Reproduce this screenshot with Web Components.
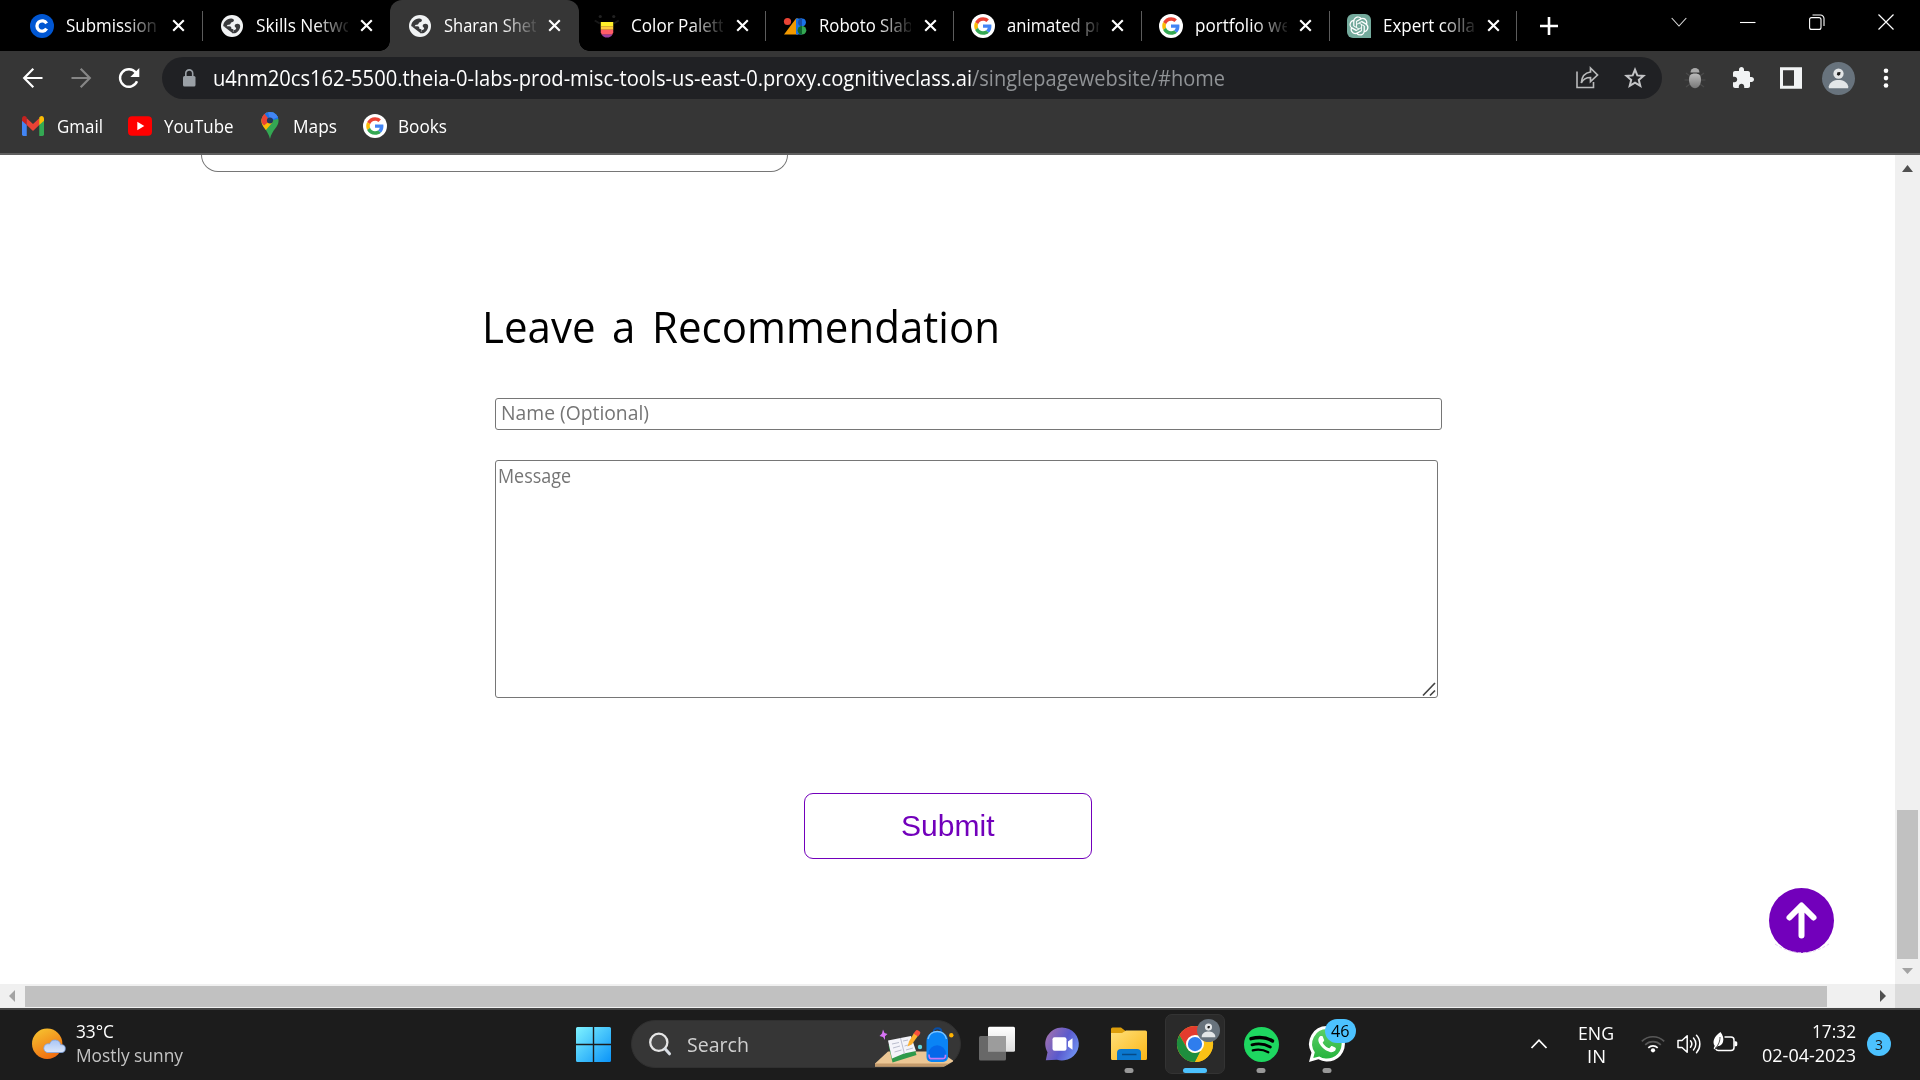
<!DOCTYPE html>
<html lang="en">
<head>
<meta charset="utf-8">
<title>Sharan Shetty</title>
<style>
html,body{margin:0;padding:0;height:100%;overflow:hidden;background:#fff}
body{font-family:"Open Sans","Noto Sans",sans-serif;font-size:18px}
</style>
</head>
<body>
<desktop-screen></desktop-screen>
<script>
const ICONS = {
coursera:['0 0 24 24','<circle cx="12" cy="12" r="12" fill="#0056d2"/><path d="M16.6 9.3A5.2 5.2 0 1 0 16.6 14.7" fill="none" stroke="#fff" stroke-width="3.3"/>'],
globe:['0 0 24 24','<circle cx="12" cy="12" r="11" fill="#f1f3f4"/><path d="M11.6 4.6C14 5 14.6 6.4 13.4 7.4c-1 .9-2.6.6-2.8 2 .1 1-1.500 1.100-2.500 1.300-1.300.300-.8 1.500-2 1.700L3.200 12.200c.1-4 3.600-8 8.400-7.600zM3.600 12.200h5.800c1.600.1 2.200 1.100 1.900 2.600l1.800.5c.8.4.5 1.600-.2 2l.1 2.200" fill="#3a3b3d"/><path d="M15.500 10.200c1.200-.9 3.200-.7 4.300.5 1.200 2.400-.5 6.500-4 8.300-1.400.5-2.900.5-3.700-.3 1.100-.3 1.500-1.200 1.600-2.400.6-.7 2.300-.3 2.500-1.900-.2-1.600-2.800-1.600-.7-4.200z" fill="#3a3b3d"/>'],
palette:['2.25 .5 24 24','<g fill="#222"><circle cx="7.500" cy="3" r="1.600"/><circle cx="21" cy="3" r="1.600"/></g><path d="M2 7l5 3M26 7l-5 3" stroke="#181818" stroke-width="2"/><path d="M8 8.500h12.500v4.500H8z" fill="#fff02a"/><path d="M8 12.800h12.500v3.500H8z" fill="#ffc93d"/><path d="M8 16.200h12.500v2.500l-1 2.600H9l-1-2.600z" fill="#ff5d68"/><path d="M9 21h10.600c-1 2.200-3 3.100-5.300 3.100S10 23.200 9 21z" fill="#9b3fa0"/>'],
gfonts:['0 0 24 24','<path d="M13 4.500h2v16H1z" fill="#f29900"/><path d="M13 4.500h6v16h-6z" fill="#1a73e8"/><circle cx="4.500" cy="7.500" r="3.600" fill="#ea4335"/><circle cx="19" cy="8.300" r="3.900" fill="#1a73e8"/><path d="M19 4.400a3.900 3.900 0 0 0 0 7.800z" fill="#174ea6"/><circle cx="19" cy="16.200" r="4.300" fill="#34a853"/><path d="M19 11.900a4.300 4.300 0 0 0 0 8.600z" fill="#0d652d"/>'],
google:['0 0 24 24','<circle cx="12" cy="12" r="12" fill="#fff"/><g transform="translate(3.200 3.200) scale(.367)"><path fill="#EA4335" d="M24 9.500c3.540 0 6.710 1.220 9.210 3.600l6.850-6.850C35.900 2.380 30.470 0 24 0 14.620 0 6.510 5.380 2.560 13.220l7.980 6.190C12.430 13.720 17.740 9.500 24 9.500z"/><path fill="#4285F4" d="M46.980 24.550c0-1.570-.15-3.090-.38-4.550H24v9.020h12.940c-.58 2.960-2.260 5.480-4.780 7.180l7.730 6c4.510-4.180 7.090-10.360 7.090-17.650z"/><path fill="#FBBC05" d="M10.530 28.590c-.48-1.450-.76-2.990-.76-4.590s.27-3.140.76-4.590l-7.980-6.190C.92 16.460 0 20.120 0 24c0 3.880.92 7.540 2.560 10.780l7.970-6.190z"/><path fill="#34A853" d="M24 48c6.480 0 11.930-2.130 15.890-5.810l-7.730-6c-2.150 1.450-4.920 2.300-8.160 2.300-6.260 0-11.570-4.220-13.470-9.910l-7.980 6.190C6.510 42.620 14.620 48 24 48z"/></g>'],
openai:['0 0 24 24','<path d="M6 0h12a6 6 0 0 1 6 6v18H6a6 6 0 0 1-6-6V6a6 6 0 0 1 6-6z" fill="#74aa9c"/><path transform="translate(2.400 2.400) scale(.8)" fill="#fff" d="M22.2819 9.8211a5.9847 5.9847 0 0 0-.5157-4.9108 6.0462 6.0462 0 0 0-6.5098-2.9A6.0651 6.0651 0 0 0 4.9807 4.1818a5.9847 5.9847 0 0 0-3.9977 2.9 6.0462 6.0462 0 0 0 .7427 7.0966 5.98 5.98 0 0 0 .511 4.9107 6.051 6.051 0 0 0 6.5146 2.9001A5.9847 5.9847 0 0 0 13.2599 24a6.0557 6.0557 0 0 0 5.7718-4.2058 5.9894 5.9894 0 0 0 3.9977-2.9001 6.0557 6.0557 0 0 0-.7475-7.0729zm-9.022 12.6081a4.4755 4.4755 0 0 1-2.8764-1.0408l.1419-.0804 4.7783-2.7582a.7948.7948 0 0 0 .3927-.6813v-6.7369l2.02 1.1686a.071.071 0 0 1 .038.052v5.5826a4.504 4.504 0 0 1-4.4945 4.4944zm-9.6607-4.1254a4.4708 4.4708 0 0 1-.5346-3.0137l.142.0852 4.783 2.7582a.7712.7712 0 0 0 .7806 0l5.8428-3.3685v2.3324a.0804.0804 0 0 1-.0332.0615L9.74 19.9502a4.4992 4.4992 0 0 1-6.1408-1.6464zM2.3408 7.8956a4.485 4.485 0 0 1 2.3655-1.9728V11.6a.7664.7664 0 0 0 .3879.6765l5.8144 3.3543-2.0201 1.1685a.0757.0757 0 0 1-.071 0l-4.8303-2.7865A4.504 4.504 0 0 1 2.3408 7.872zm16.5963 3.8558L13.1038 8.364 15.1192 7.2a.0757.0757 0 0 1 .071 0l4.8303 2.7913a4.4944 4.4944 0 0 1-.6765 8.1042v-5.6772a.79.79 0 0 0-.407-.667zm2.0107-3.0231l-.142-.0852-4.7735-2.7818a.7759.7759 0 0 0-.7854 0L9.409 9.2297V6.8974a.0662.0662 0 0 1 .0284-.0615l4.8303-2.7866a4.4992 4.4992 0 0 1 6.6802 4.66zM8.3065 12.863l-2.02-1.1638a.0804.0804 0 0 1-.038-.0567V6.0742a4.4992 4.4992 0 0 1 7.3757-3.4537l-.142.0805L8.704 5.459a.7948.7948 0 0 0-.3927.6813zm1.0976-2.3654l2.602-1.4998 2.6069 1.4998v2.9994l-2.5974 1.4997-2.6067-1.4997Z"/>'],
close:['0 0 14 14','<path d="M1.300 1.300l11.400 11.400M12.700 1.300L1.300 12.700" stroke="#fff" stroke-width="2.300"/>'],
plus:['0 0 18 18','<path d="M9 0v18M0 9h18" stroke="#fff" stroke-width="2.600"/>'],
winv:['0 0 16 16','<path d="M.7 4L8 12l7.300-8" fill="none" stroke="#ddd" stroke-width="1.100"/>'],
winmin:['0 0 16 16','<path d="M0 8.500h15.500" stroke="#fff" stroke-width="1.100"/>'],
winmax:['0 0 16 16','<rect x=".6" y="3.600" width="11.400" height="11.800" rx="2" fill="none" stroke="#fff" stroke-width="1.100"/><path d="M3.500 1h8a3.500 3.500 0 0 1 3.500 3.500v7.500" fill="none" stroke="#fff" stroke-width="1.100"/>'],
winx:['0 0 16 16','<path d="M.5.5l15 15M15.500.5l-15 15" stroke="#fff" stroke-width="1.200"/>'],
back:['0 0 24 24','<path d="M21.500 12H3.500M12.300 2.800L3.200 12l9.100 9.200" fill="none" stroke="#fff" stroke-width="2.200"/>'],
fwd:['0 0 24 24','<path d="M2.500 12h18M11.700 2.800l9.100 9.200-9.100 9.200" fill="none" stroke="#868686" stroke-width="2.200"/>'],
reload:['0 0 24 24','<path d="M20 15.300A8.800 8.800 0 1 1 18.800 6.600" fill="none" stroke="#fff" stroke-width="2.400"/><path d="M22.300 2v9h-9z" fill="#fff"/>'],
lock:['0 0 24 24','<rect x="6" y="10" width="12.500" height="10.600" rx="1.500" fill="#9aa0a6"/><path d="M8.800 10.500V7.300a3.450 3.450 0 0 1 6.900 0v3.200" fill="none" stroke="#9aa0a6" stroke-width="1.600"/>'],
share:['0 0 24 24','<path d="M2 5.500v16h16.500v-5.500" fill="none" stroke="#b9babb" stroke-width="1.600"/><path d="M15.500 2l7 7-7 6.500v-4C11 11.500 8 13.500 6.300 17c.4-6 3.600-10.300 9.200-11z" fill="none" stroke="#b9babb" stroke-width="1.700" stroke-linejoin="miter"/>'],
star:['0 0 24 24','<path d="M12 3.700l2.300 5.700 6.200.5-4.700 4 1.500 6L12 16.600 6.700 19.900l1.500-6-4.700-4 6.200-.5z" fill="none" stroke="#c3c4c6" stroke-width="2"/>'],
bug:['0 0 24 24','<defs><linearGradient id="b" x2="0" y2="1"><stop stop-color="#bbb"/><stop offset="1" stop-color="#777"/></linearGradient></defs><path d="M3 7l4 3M21 7l-4 3M1.500 14H6M22.500 14H18M3 21l4-3M21 21l-4-3" stroke="#4a4a4a" stroke-width="1.200"/><path d="M7.500 6.500a4.500 4.500 0 0 1 9 0z" fill="#aaa"/><path d="M12 7.500c4.500 0 6 2 6 6.500 0 4-2.500 8.300-6 8.300S6 18 6 14c0-4.500 1.500-6.500 6-6.500z" fill="url(#b)"/>'],
puzzle:['0 0 24 24','<path fill="#f1f3f4" d="M20.500 11H19V7c0-1.100-.9-2-2-2h-4V3.500C13 2.120 11.880 1 10.500 1S8 2.120 8 3.500V5H4c-1.100 0-1.990.9-1.990 2v3.800H3.500c1.490 0 2.700 1.210 2.700 2.700s-1.210 2.700-2.700 2.700H2V20c0 1.100.9 2 2 2h3.800v-1.500c0-1.490 1.210-2.700 2.700-2.700 1.490 0 2.700 1.210 2.700 2.700V22H17c1.100 0 2-.9 2-2v-4h1.500c1.380 0 2.500-1.120 2.500-2.500S21.880 11 20.500 11z"/>'],
panel:['0 0 24 24','<path fill-rule="evenodd" fill="#f1f3f4" d="M1 1.300h22v21.500H1zM4 4.300v15.500h11V4.300z"/>'],
avatar:['0 0 34 34','<circle cx="17" cy="17" r="17" fill="#68737d"/><circle cx="17" cy="12" r="5.300" fill="#e3e6e8"/><path d="M7 27v-2c1-4.500 5.500-6.500 10-6.500s9 2 10 6.500v2z" fill="#e3e6e8"/><path d="M15.300 13.200l.6-2.700 3.200-.3-.4 3-1.700 1z" fill="#1d1d1d"/>'],
menu:['0 0 24 24','<g fill="#fff"><circle cx="12" cy="4.700" r="2.300"/><circle cx="12" cy="12.100" r="2.300"/><circle cx="12" cy="19.500" r="2.300"/></g>'],
gmail:['0 0 24 18','<path d="M0 2.500h5.200V18H1.600A1.600 1.600 0 0 1 0 16.400z" fill="#4285f4"/><path d="M18.800 2.500H24v13.900a1.600 1.600 0 0 1-1.600 1.600h-3.600z" fill="#34a853"/><path d="M5.200 2L12 7.200 18.800 2v6.200L12 13.400 5.200 8.200z" fill="#ea4335"/><path d="M0 2.600C0 0 2.700-.7 4.500.7l.7.600v6.900L0 4.300z" fill="#c5221f"/><path d="M24 2.600c0-2.600-2.700-3.300-4.500-1.900l-.7.600v6.900L24 4.300z" fill="#fbbc04"/>'],
youtube:['0 0 24 20','<rect y=".3" width="24" height="19.400" rx="4" fill="#f00"/><path d="M9.300 5.800l7 4.200-7 4.200z" fill="#fff"/>'],
maps:['0 0 18 28','<clipPath id="m"><path d="M9 0a8.600 8.600 0 0 1 8.600 8.700C17.600 16 11 18 9 28 7 18 .4 16 .4 8.700A8.600 8.600 0 0 1 9 0z"/></clipPath><g clip-path="url(#m)"><path d="M0 0h18v28H0z" fill="#34a853"/><path d="M0 6l6 5 6-5 0 4L3 21-3 14z" fill="#fbbc04"/><path d="M0 0h6L9 9 3 14-2 8z" fill="#ea4335"/><path d="M3 1L18-4v11L9 9z" fill="#1a73e8"/><path d="M7 0h11v5L13 7 9 8z" fill="#4285f4"/></g><circle cx="9" cy="8.700" r="3.100" fill="#20385e"/>'],
weather:['0 0 33 33','<defs><linearGradient id="s" x1=".2" y1="0" x2=".7" y2="1"><stop stop-color="#f6c22f"/><stop offset="1" stop-color="#f0690f"/></linearGradient><linearGradient id="c" x2="0" y2="1"><stop stop-color="#a9c5f5"/><stop offset="1" stop-color="#dbe6fa"/></linearGradient></defs><circle cx="15.200" cy="15.700" r="15.200" fill="url(#s)"/><path d="M15 24.500h14.200a3.900 3.900 0 0 0 .3-7.800h-.9a5.700 5.700 0 0 0-11-.8A4.400 4.400 0 0 0 15 24.500z" fill="url(#c)" stroke="#7fa6e6" stroke-width=".8"/>'],
windows:['0 0 35 35','<defs><linearGradient id="w" x2="1" y2="1"><stop stop-color="#7ff3ff"/><stop offset="1" stop-color="#0a93f8"/></linearGradient></defs><path fill="url(#w)" d="M1.500 0H16.800v16.800H0V1.500A1.500 1.500 0 0 1 1.500 0zM18.200 0h15.300A1.500 1.500 0 0 1 35 1.500v15.300H18.200zM0 18.200h16.800V35H1.500A1.500 1.500 0 0 1 0 33.500zM18.200 18.200H35v15.300a1.500 1.500 0 0 1-1.500 1.500H18.200z"/>'],
search:['0 0 24 24','<circle cx="10.800" cy="10.300" r="8.600" fill="#4b4b4b" stroke="#e6e6e6" stroke-width="2.300"/><path d="M17 16.800l4.500 5" stroke="#d9dee5" stroke-width="3" stroke-linecap="round"/>'],
desk:['0 0 80 40','<path d="M13 24.500h52l13 9v1l-9 5H0v-3z" fill="#ecc795"/><path d="M0 36.500h74l-5 3H0z" fill="#c39a6b"/><path d="M8 2.500l1.500 3.500 3 1-2.500 2.200 0 3.800-2-3-3.500-1 2.500-2.500z" fill="#d773f5"/><path d="M13.500 18l4 17.500 24-7.500 -1.500-5z" fill="#2e9a4b"/><path d="M13 13.500l12.500-2.500L36 9l5 15-12 2.500-12 5z" fill="#f4f4fa"/><path d="M25.500 11L29.500 27M17 17l7-1.500M18 21l7-2M19.500 25l7-2M28 14l5-1M29.500 19l7-2M31 23l7-2" stroke="#b3b7c8" stroke-width=".9" fill="none"/><path d="M32.500 19.500l1.500-5 5-8.500 4 2.700-6 8.500z" fill="#ffb02e"/><path d="M38.500 6.500l2-2.500a2 2 0 0 1 2.800-.5l1.200.8a2 2 0 0 1 .5 2.700l-2 2.500z" fill="#f8503c"/><circle cx="45" cy="20" r="2.200" fill="#5fd6e0"/><circle cx="76.300" cy="8.300" r="2.200" fill="#ffb300"/><path d="M58.500 5c0-5 8-5 8 0" fill="none" stroke="#084fa8" stroke-width="1.800"/><path d="M51.500 14c0-13 21.500-13 21.500 0v16a5 5 0 0 1-5 5H56.500a5 5 0 0 1-5-5z" fill="#0a84f5"/><path d="M53 12c2-10 16.500-10 18.500 0" fill="none" stroke="#7cc4ff" stroke-width="1.300"/><path d="M53.500 27a8.700 8.700 0 0 1 17.400 0v6H53.500z" fill="#0568ea"/><path d="M54 27.500c0 4 1 4.200 3 4.200h10.500c2 0 3-.5 3-4" fill="none" stroke="#c77bf5" stroke-width="1.700"/>'],
taskview:['0 0 36 36','<defs><linearGradient id="t" x2="0" y2="1"><stop stop-color="#fff"/><stop offset="1" stop-color="#ddd"/></linearGradient></defs><rect x="9" y=".8" width="27" height="25" rx="1.500" fill="url(#t)"/><rect x="0" y="10" width="27" height="24.500" rx="1.500" fill="#686868"/><path d="M9 10h18v15.800H9z" fill="#9c9c9c"/>'],
chat:['0 0 34 35','<defs><linearGradient id="h" x1="0" y1=".1" x2="1" y2=".6"><stop stop-color="#a672ac"/><stop offset=".6" stop-color="#5a5acd"/><stop offset="1" stop-color="#6f8ff0"/></linearGradient></defs><path d="M17 .5a17 17 0 1 1-5 33.300L.8 34.300 2.500 26A17 17 0 0 1 17 .5z" fill="url(#h)"/><rect x="7.500" y="10.500" width="14" height="14" rx="2" fill="#fff"/><path d="M23 15l4.500-3.500v12L23 20z" fill="#fff"/>'],
folder:['0 0 36 36','<defs><linearGradient id="f" x2="1" y2="1"><stop stop-color="#ffe07a"/><stop offset="1" stop-color="#fbb616"/></linearGradient></defs><path d="M0 3a1.500 1.500 0 0 1 1.500-1.500H10L14.500 5H20v6H0z" fill="#dd9e0b"/><path d="M0 7h11l4-2.500h19.500A1.500 1.500 0 0 1 36 6v26.500a1.500 1.500 0 0 1-1.500 1.500h-33A1.500 1.500 0 0 1 0 32.500z" fill="url(#f)"/><path d="M6 34v-7a4 4 0 0 1 4-4h16a4 4 0 0 1 4 4v7z" fill="#0b78cf"/><path d="M11 28.500h14.500" stroke="#064a86" stroke-width="1.500"/>'],
chrome:['0 0 48 48','<circle cx="24" cy="24" r="24" fill="#fbc116"/><path d="M3.200 12A24 24 0 0 1 44.800 12H24L13.600 30z" fill="#e33b2e"/><path d="M3.200 12L13.600 30c2 3.500 6 6 10.400 6l7-2-7 14A24 24 0 0 1 3.200 12z" fill="#1e8e3e"/><path d="M34.400 30L24 48A24 24 0 0 0 44.800 12H24z" fill="#fbc116"/><circle cx="24" cy="24" r="12" fill="#fff"/><circle cx="24" cy="24" r="9.500" fill="#2f7ded"/>'],
spotify:['0 0 35 35','<circle cx="17.500" cy="17.500" r="17.500" fill="#1ed760"/><g fill="none" stroke="#000" stroke-linecap="round"><path d="M7 11.700c7-1.900 15.500-1.400 21.500 2.300" stroke-width="3.400"/><path d="M8 17.800c6-1.600 12.700-1 18.300 2.200" stroke-width="2.800"/><path d="M8.800 23.400c5-1.300 10.500-.8 15.500 1.900" stroke-width="2.300"/></g>'],
whatsapp:['0 0 36 36','<defs><linearGradient id="a" x2="0" y2="1"><stop stop-color="#5bd066"/><stop offset="1" stop-color="#27b43e"/></linearGradient></defs><path d="M18 0a17.800 17.800 0 1 1-8.600 33.300L0 36l2.500-9.200A17.800 17.800 0 0 1 18 0z" fill="#fff"/><path d="M18 3a14.800 14.800 0 1 1-7.700 27.500L4.300 32l1.500-5.800A14.800 14.800 0 0 1 18 3z" fill="url(#a)"/><path transform="translate(.6 .6) scale(1.450)" fill="#fff" d="M17.472 14.382c-.297-.149-1.758-.867-2.030-.967-.273-.099-.471-.148-.67.15-.197.297-.767.966-.94 1.164-.173.199-.347.223-.644.075-.297-.15-1.255-.463-2.390-1.475-.883-.788-1.480-1.761-1.653-2.059-.173-.297-.018-.458.13-.606.134-.133.298-.347.446-.52.149-.174.198-.298.298-.497.099-.198.050-.371-.025-.52-.075-.149-.669-1.612-.916-2.207-.242-.579-.487-.5-.669-.51-.173-.008-.371-.010-.57-.010-.198 0-.52.074-.792.372-.272.297-1.040 1.016-1.040 2.479 0 1.462 1.065 2.875 1.213 3.074.149.198 2.096 3.200 5.077 4.487.709.306 1.262.489 1.694.625.712.227 1.360.195 1.871.118.571-.085 1.758-.719 2.006-1.413.248-.694.248-1.289.173-1.413-.074-.124-.272-.198-.57-.347"/>'],
chevup:['0 0 18 12','<path d="M1.500 10L9 2.200 16.500 10" fill="none" stroke="#fff" stroke-width="1.800"/>'],
wifi:['0 0 24 24','<g fill="none" stroke-width="1.700"><path d="M.8 9.300a16 16 0 0 1 22.400 0" stroke="#585858"/><path d="M4.200 12.800a11.200 11.200 0 0 1 15.600 0" stroke="#585858"/><path d="M7.300 15.800a6.700 6.700 0 0 1 9.400 0" stroke="#fff"/></g><circle cx="12" cy="18.300" r="2.100" fill="#fff"/>'],
speaker:['0 0 24 24','<g fill="none" stroke="#fff" stroke-width="1.500" stroke-linecap="round" stroke-linejoin="round"><path d="M1 8.500h4l5.200-4.800v16.600L5 15.500H1z"/><path d="M13.500 8.800a5 5 0 0 1 0 6.400M16.500 6a9 9 0 0 1 0 12M19.500 3.300a13 13 0 0 1 0 17.400"/></g>'],
battery:['0 0 25 24','<path d="M11.500 5H18a3 3 0 0 1 3 3v7.500a3 3 0 0 1-3 3H5.500a3 3 0 0 1-2.800-1.500" fill="none" stroke="#fff" stroke-width="1.500"/><path d="M21.500 9.300h1.300a1.500 1.500 0 0 1 1.500 1.500v2a1.500 1.500 0 0 1-1.500 1.500h-1.300z" fill="#fff"/><path d="M7.500 0c2.500 3.500 3.500 6.500 2.500 10-.7 2.300-2.300 4-5 4L1 17.500c-.5-1.500 0-2.500.8-3.500C-1 10 1 4.500 7.500 0z" fill="#fff"/><path d="M2.500 16C6 12.500 7 8.500 7 5" stroke="#1c1c1c" stroke-width=".8" fill="none"/>'],
uparrow:['0 0 65 65','<circle cx="32.500" cy="32.500" r="32.500" fill="#7200bb"/><path d="M32.500 47.500V20M20.500 29.500l12-12 12 12" fill="none" stroke="#fff" stroke-width="6" stroke-linecap="round" stroke-linejoin="round"/>'],
arc:['0 0 60 10','<path d="M3 0q27 17.500 54 0" fill="none" stroke="#e3ccf0" stroke-width="1" stroke-dasharray="3 2"/>'],
grip:['0 0 14 14','<path d="M1 13.500L13 1M8 13.500L13 8.500" stroke="#444" stroke-width="1.700"/>'],
tu:['0 0 11 7','<path d="M5.500 0L11 7H0z" fill="#505050"/>'],
td:['0 0 11 7','<path d="M5.500 7L11 0H0z" fill="#a3a3a3"/>'],
tl:['0 0 7 12','<path d="M0 6l7-6v12z" fill="#a3a3a3"/>'],
tr:['0 0 7 12','<path d="M7 6L0 0v12z" fill="#505050"/>']
};
const def=(n,html,after)=>customElements.define(n,class extends HTMLElement{
  connectedCallback(){ if(this.shadowRoot)return;
    const r=this.attachShadow({mode:'open'});
    r.innerHTML=typeof html==='function'?html(this):html;
    if(after)after(this,r);
  }});

// <ui-icon name w h>: one glyph of the set
def('ui-icon',e=>{const [vb,s]=ICONS[e.getAttribute('name')];const w=e.getAttribute('w')||24,h=e.getAttribute('h')||w;
  return `<style>:host{display:block;flex:none;width:${w}px;height:${h}px}svg{display:block;overflow:visible}</style><svg width="${w}" height="${h}" viewBox="${vb}" preserveAspectRatio="none">${s}</svg>`});

// <fit-text w>: a single line condensed or widened to the given width
def('fit-text',e=>`<style>:host{display:block;flex:none;width:${e.getAttribute('w')}px;white-space:nowrap}span{display:inline-block;transform-origin:0 50%}</style><span><slot></slot></span>`,
 (e,r)=>{const s=r.querySelector('span');const n=s.offsetWidth;if(n)s.style.transform=`scaleX(${e.getAttribute('w')/s.getBoundingClientRect().width})`;});

def('browser-tab',e=>`<style>
:host{display:flex;align-items:center;flex:none;box-sizing:border-box;width:187.800px;height:51px;padding-left:18px;color:#fff;position:relative}
:host([first]){padding-left:16px}
.t{width:92px;margin-left:12px;margin-top:-1px;overflow:hidden;-webkit-mask:linear-gradient(90deg,#000 58px,transparent 96px)}
:host([first]) .t{width:93px}
ui-icon.x{margin-left:12.500px}
.s{position:absolute;right:-1px;top:11px;width:1px;height:30px;background:#5c5c5c}
:host([active]){background:#363636;border-radius:12px 12px 0 0;width:189.800px;margin-right:-2px}
:host([active])::before,:host([active])::after{content:"";position:absolute;bottom:0;width:10px;height:10px}
:host([active])::before{left:-10px;background:radial-gradient(circle at 0 0,transparent 9.500px,#363636 10px)}
:host([active])::after{right:-10px;background:radial-gradient(circle at 100% 0,transparent 9.500px,#363636 10px)}
</style><ui-icon name="${e.getAttribute('icon')}"></ui-icon><div class="t"><fit-text w="${e.getAttribute('w')}"><slot></slot></fit-text></div><ui-icon class="x" name="close" w="13"></ui-icon>${e.hasAttribute('sep')?'<div class="s"></div>':''}`);

def('tab-strip',`<style>:host{display:flex;align-items:center;height:51px;background:#000;padding-left:14px;box-sizing:border-box}
.win{display:flex;height:43px;align-items:center;margin-left:113px;gap:53px;align-self:flex-start}</style>
<browser-tab icon="coursera" w="91" first sep>Submission</browser-tab>
<browser-tab icon="globe" w="97">Skills Netwo</browser-tab>
<browser-tab icon="globe" w="93" active>Sharan Shet</browser-tab>
<browser-tab icon="palette" w="93" sep>Color Palett</browser-tab>
<browser-tab icon="gfonts" w="94" sep>Roboto Slab</browser-tab>
<browser-tab icon="google" w="95" sep>animated pr</browser-tab>
<browser-tab icon="google" w="96" sep>portfolio we</browser-tab>
<browser-tab icon="openai" w="92" sep>Expert colla</browser-tab>
<ui-icon name="plus" w="18" style="margin-left:24px"></ui-icon>
<div class="win"><ui-icon name="winv" w="16"></ui-icon><ui-icon name="winmin" w="16"></ui-icon><ui-icon name="winmax" w="16"></ui-icon><ui-icon name="winx" w="16"></ui-icon></div>`);

def('omni-box',`<style>:host{display:flex;align-items:center;flex:none;box-sizing:border-box;width:1500px;height:42px;border-radius:21px;background:#202124;padding:0 15px;font-size:21px;color:#fff}
.p{color:#909396}ui-icon.sh{margin-left:auto}</style>
<ui-icon name="lock"></ui-icon><fit-text w="759" style="margin-left:12px">u4nm20cs162-5500.theia-0-labs-prod-misc-tools-us-east-0.proxy.cognitiveclass.ai</fit-text><fit-text class="p" w="253">/singlepagewebsite/#home</fit-text>
<ui-icon class="sh" name="share"></ui-icon><ui-icon name="star" style="margin-left:24px"></ui-icon>`);

def('nav-bar',`<style>:host{display:flex;align-items:center;height:54px;background:#363636;padding-left:21px}
ui-icon+ui-icon{margin-left:24px}omni-box{margin:0 21px}</style>
<ui-icon name="back"></ui-icon><ui-icon name="fwd"></ui-icon><ui-icon name="reload"></ui-icon>
<omni-box></omni-box>
<ui-icon name="bug"></ui-icon><ui-icon name="puzzle"></ui-icon><ui-icon name="panel"></ui-icon><ui-icon name="avatar" w="33" style="margin-left:19px"></ui-icon><ui-icon name="menu" style="margin-left:19px"></ui-icon>`);

def('bookmark-link',e=>`<style>:host{display:flex;align-items:center;color:#fff;gap:${e.getAttribute('gap')}px}</style><ui-icon name="${e.getAttribute('icon')}" w="${e.getAttribute('iw')}" h="${e.getAttribute('ih')}"></ui-icon><fit-text w="${e.getAttribute('w')}"><slot></slot></fit-text>`);
def('bookmark-bar',`<style>:host{display:flex;align-items:center;box-sizing:border-box;height:50px;padding:0 0 7px 22px;background:#363636;border-bottom:2px solid #5f5f5f}</style>
<bookmark-link icon="gmail" iw="22" ih="20" gap="13" w="46">Gmail</bookmark-link>
<bookmark-link icon="youtube" iw="24" ih="20" gap="11.500" w="69.500" style="margin-left:25px">YouTube</bookmark-link>
<bookmark-link icon="maps" iw="18" ih="27" gap="14" w="44" style="margin-left:28px">Maps</bookmark-link>
<bookmark-link icon="google" iw="24" ih="24" gap="11" w="49" style="margin-left:25.500px">Books</bookmark-link>`);

def('form-field',e=>`<style>:host{display:flex;position:relative;box-sizing:border-box;border:1px solid #767676;border-radius:3px;background:#fff;color:#757575;font-size:19.500px;font-weight:500}
ui-icon{position:absolute;right:1px;bottom:1px}</style><slot></slot>${e.hasAttribute('resizable')?'<ui-icon name="grip" w="14"></ui-icon>':''}`);
def('submit-button',`<style>:host{display:flex;align-items:center;justify-content:center;box-sizing:border-box;width:288px;height:66px;border:1px solid #7200bb;border-radius:9px;color:#7200bb;font:30px "Liberation Sans",Arial,sans-serif}</style><fit-text w="93.500"><slot></slot></fit-text>`);
def('page-content',`<style>:host{display:flex;flex-direction:column;align-items:flex-start;position:relative;width:1895px;height:829px;overflow:hidden;background:#fff}
.card{width:587px;height:17px;box-sizing:border-box;margin-left:201px;border:1px solid #767676;border-top:0;border-radius:0 0 20px 20px}
h1{margin:119px 0 0 481.500px;height:70px;line-height:70px;font-size:44.500px;font-weight:400;color:#000;display:flex;word-spacing:6px}
.n{margin:37px 0 0 495px;width:947px;height:32px;align-items:center;padding-left:4.500px;line-height:26px;padding-bottom:2px}
.m{margin:30px 0 0 495px;width:943px;height:238px;line-height:30px;padding-left:2px}
submit-button{margin:95px 0 0 804px}
.fab{position:absolute;left:1769px;top:732.500px}.arc{position:absolute;left:1772px;top:789px}</style>
<div class="card"></div>
<h1><fit-text w="518">Leave a Recommendation</fit-text></h1>
<form-field class="n"><fit-text w="148">Name (Optional)</fit-text></form-field>
<form-field class="m" resizable><fit-text w="73">Message</fit-text></form-field>
<submit-button>Submit</submit-button>
<ui-icon class="fab" name="uparrow" w="65"></ui-icon><ui-icon class="arc" name="arc" w="60" h="10"></ui-icon>`);

def('scroll-v',`<style>:host{display:flex;flex-direction:column;align-items:center;width:25px;height:829px;background:#f0f0f0}
.th{width:21px;height:149px;background:#c1c1c1;margin-top:638px}</style><ui-icon name="tu" w="11" h="7" style="margin-top:10px"></ui-icon><div class="th"></div><ui-icon name="td" w="11" h="6" style="margin-top:9px"></ui-icon>`);
def('scroll-h',`<style>:host{display:flex;align-items:center;height:24px;background:#f0f0f0;border-bottom:2px solid #444}
.th{width:1802px;height:21px;background:#c1c1c1;margin:0 53px 0 10px}.c{margin-left:auto;width:25px;height:24px;background:#dcdcdc}</style><ui-icon name="tl" w="6" h="12" style="margin-left:9px"></ui-icon><div class="th"></div><ui-icon name="tr" w="6" h="12"></ui-icon><div class="c"></div>`);

def('task-app',e=>`<style>:host{display:flex;align-items:center;justify-content:center;flex:none;position:relative;height:60px}
:host([focused]){width:60px;box-sizing:border-box;background:#2a2a2a;border:1px solid #333;border-radius:7px}
.d{position:absolute;left:50%;bottom:1px;transform:translateX(-50%);width:9px;height:5px;border-radius:3px;background:#989898}
:host([focused]) .d{width:24px;bottom:0;background:#4cc2ff}</style><ui-icon name="${e.getAttribute('icon')}" w="${e.getAttribute('w')}"></ui-icon>${e.hasAttribute('open')?'<div class="d"></div>':''}<slot></slot>`);
def('search-pill',`<style>:host{display:flex;align-items:center;flex:none;box-sizing:border-box;width:330px;height:48px;border-radius:24px;background:#363636;border:1px solid #303030;padding:0 5px 0 16px;color:#cfcfcf;font-size:20.500px}ui-icon.a{margin-left:auto;margin-top:5px}</style>
<ui-icon name="search"></ui-icon><fit-text w="62" style="margin-left:14.500px">Search</fit-text><ui-icon class="a" name="desk" w="80" h="40"></ui-icon>`);
def('task-bar',`<style>:host{display:flex;align-items:center;height:70px;box-sizing:border-box;padding:0 0 2px 32px;background:#1c1c1c;color:#fff}
.l{display:flex;flex-direction:column;line-height:24px;flex:none;padding-bottom:2px}.g{color:#c3c3c3}
.e{align-items:center;line-height:23px;padding:1px 0 0}.r{align-items:flex-end}
.b{position:absolute;left:16px;top:5px;width:31px;height:24px;border-radius:12px;background:#4cc2ff;color:#000;display:flex;align-items:center;justify-content:center;font-size:16px}
.n{width:24px;height:24px;border-radius:50%;background:#4cc2ff;color:#1c1c1c;display:flex;align-items:center;justify-content:center;font-size:15px;margin-left:11px}
.v{position:absolute;right:4px;top:4px}</style>
<ui-icon name="weather" w="33"></ui-icon>
<div class="l" style="margin-left:10.500px"><fit-text w="38">33°C</fit-text><fit-text class="g" w="107">Mostly sunny</fit-text></div>
<ui-icon name="windows" w="35" style="margin-left:393.500px"></ui-icon>
<search-pill style="margin-left:20px"></search-pill>
<task-app icon="taskview" w="36" style="margin-left:18px"></task-app>
<task-app icon="chat" w="34" style="margin-left:30px"></task-app>
<task-app icon="folder" w="36" open style="margin-left:32px"></task-app>
<task-app icon="chrome" w="36" open focused style="margin-left:18px"><ui-icon class="v" name="avatar" w="23"></ui-icon></task-app>
<task-app icon="spotify" w="35" open style="margin-left:18.500px"></task-app>
<task-app icon="whatsapp" w="36" open style="margin-left:30.500px"><div class="b"><fit-text w="18.500">46</fit-text></div></task-app>
<ui-icon name="chevup" w="18" h="12" style="margin-left:185px"></ui-icon>
<div class="l e" style="margin-left:30px"><fit-text w="36">ENG</fit-text><fit-text w="19">IN</fit-text></div>
<ui-icon name="wifi" style="margin-left:27px"></ui-icon><ui-icon name="speaker" style="margin-left:12px"></ui-icon><ui-icon name="battery" w="25" h="24" style="margin-left:12px"></ui-icon>
<div class="l r" style="margin-left:23.500px"><fit-text w="44">17:32</fit-text><fit-text w="94">02-04-2023</fit-text></div>
<div class="n"><fit-text w="8">3</fit-text></div>`);

def('desktop-screen',`<style>:host{display:flex;flex-direction:column;width:1920px;height:1080px;overflow:hidden}.row{display:flex}</style>
<tab-strip></tab-strip><nav-bar></nav-bar><bookmark-bar></bookmark-bar>
<div class="row"><page-content></page-content><scroll-v></scroll-v></div><scroll-h></scroll-h><task-bar></task-bar>`);
</script>
</body>
</html>
